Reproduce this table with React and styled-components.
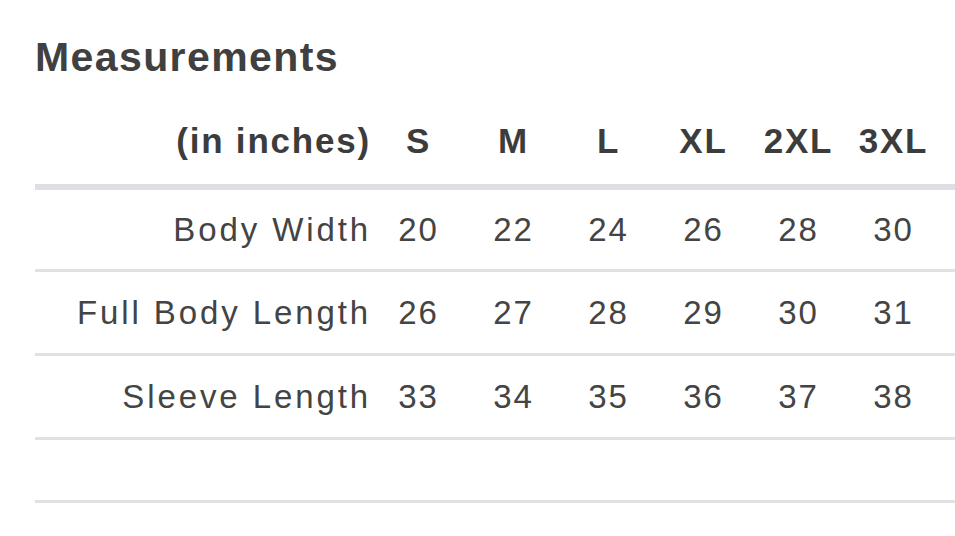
import React from "react";
import styled, { createGlobalStyle } from "styled-components";

const Global = createGlobalStyle`
  html, body { margin: 0; padding: 0; background: #ffffff; }
  body { font-family: "Liberation Sans", Arial, Helvetica, sans-serif; }
`;

const Page = styled.div`
  padding: 33px 0 0 35px;
  width: 955px;
  box-sizing: border-box;
  overflow: hidden;
`;

const Title = styled.h1`
  margin: 0;
  font-size: 41px;
  line-height: 48px;
  font-weight: 700;
  letter-spacing: 1.4px;
  color: #404040;
`;

const Table = styled.div`
  display: flex;
  flex-direction: column;
`;

const Row = styled.div`
  display: grid;
  grid-template-columns: 336px repeat(6, 95px) 1fr;
  align-items: center;
  height: ${(p) => p.$h}px;
  border-bottom: 3px solid #e1e1e3;
`;

const HeadRow = styled.div`
  display: grid;
  grid-template-columns: 336px repeat(6, 95px) 1fr;
  align-items: center;
  padding: 40px 0 23px;
  border-bottom: 6px solid #dedee5;
`;

const HeadCell = styled.div`
  font-size: 35px;
  line-height: 40px;
  font-weight: 700;
  letter-spacing: 1.8px;
  color: #3c3c3c;
  text-align: ${(p) => (p.$label ? "right" : "center")};
  white-space: nowrap;
`;

const Cell = styled.div`
  font-size: 33px;
  line-height: 40px;
  font-weight: 400;
  letter-spacing: ${(p) => (p.$label ? "2.9px" : "2px")};
  color: #444444;
  text-align: ${(p) => (p.$label ? "right" : "center")};
  white-space: nowrap;
`;

const sizes = ["S", "M", "L", "XL", "2XL", "3XL"];
const rows = [
  { label: "Body Width", values: [20, 22, 24, 26, 28, 30], h: 79 },
  { label: "Full Body Length", values: [26, 27, 28, 29, 30, 31], h: 81 },
  { label: "Sleeve Length", values: [33, 34, 35, 36, 37, 38], h: 81 },
];

export default function App() {
  return (
    <>
      <Global />
      <Page>
        <Title>Measurements</Title>
        <Table>
          <HeadRow>
            <HeadCell $label>(in inches)</HeadCell>
            {sizes.map((s) => (
              <HeadCell key={s}>{s}</HeadCell>
            ))}
            <span />
          </HeadRow>
          {rows.map((r) => (
            <Row key={r.label} $h={r.h}>
              <Cell $label>{r.label}</Cell>
              {r.values.map((v, i) => (
                <Cell key={i}>{v}</Cell>
              ))}
              <span />
            </Row>
          ))}
          <Row $h={60} />
        </Table>
      </Page>
    </>
  );
}
